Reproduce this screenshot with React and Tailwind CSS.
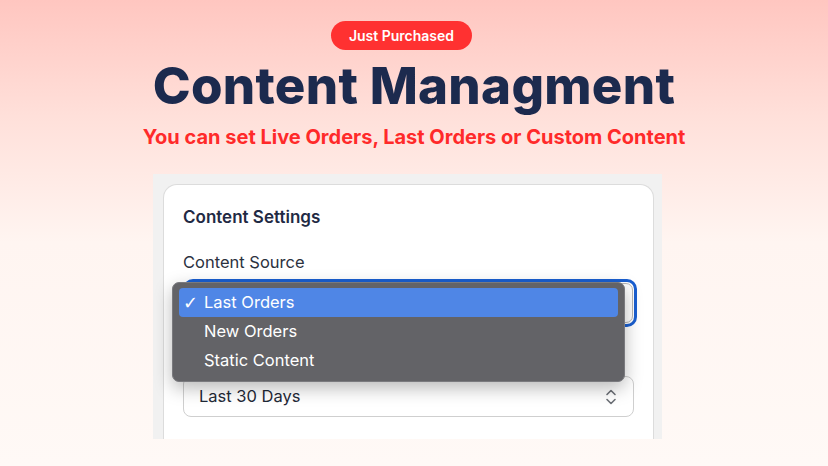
import React from 'react';

const ChevronUpDown = () => (
  <svg width="12" height="18" viewBox="0 0 12 18" fill="none" stroke="#6b6f76" strokeWidth="1.6" strokeLinecap="round" strokeLinejoin="round">
    <path d="M2 6.5L6 2.5L10 6.5" />
    <path d="M2 11.5L6 15.5L10 11.5" />
  </svg>
);

const options = ['Last Orders', 'New Orders', 'Static Content'];

const SourceMenu = () => (
  <div className="absolute left-[-11px] top-[3px] w-[453px] h-[100px] rounded-[7px] bg-[#636367] border border-[#7a7a7e] shadow-[0_6px_18px_rgba(0,0,0,0.28)] px-[6px] pt-[5px] z-10">
    {options.map((opt, i) => (
      <div
        key={opt}
        className={`h-[29px] flex items-center rounded-[4px] text-[16.5px] text-white ${i === 0 ? 'bg-[#4f86e6]' : ''}`}
      >
        <span className="w-[25px] pl-[4px] text-[18px] leading-none" style={{ fontFamily: '"DejaVu Sans", sans-serif' }}>
          {i === 0 ? '✓' : ''}
        </span>
        <span>{opt}</span>
      </div>
    ))}
  </div>
);

export default function App() {
  return (
    <div
      className="w-[828px] h-[466px] overflow-hidden flex flex-col items-center pt-[21px] bg-[linear-gradient(180deg,#ffc6c0_0%,#ffe0da_25%,#fff5f1_52%,#fff9f6_100%)]"
      style={{ fontFamily: 'Inter, "Noto Sans", sans-serif' }}
    >
      <div className="self-start ml-[331px] h-[29px] w-[141px] rounded-full bg-[#ff3131] flex items-center justify-center text-white text-[14px] font-semibold">
        Just Purchased
      </div>

      <h1 className="mt-[9px] text-[51px] leading-[54px] font-extrabold text-[#1c2a4e] tracking-[0.3px]">
        Content Managment
      </h1>

      <p className="mt-[12px] text-[20px] leading-[24px] font-bold text-[#ff2a2a]">
        You can set Live Orders, Last Orders or Custom Content
      </p>

      <div className="self-start ml-[153px] mt-[25px] w-[509px] h-[265px] bg-[#f1f1f1] pt-[10px] pl-[10px] pr-[8px]">
        <div className="h-full bg-white border border-b-0 border-[#dcdcdc] rounded-t-[14px] pl-[19px] pr-[17px] pt-[21px]">
          <h2 className="text-[17px] leading-[22px] font-semibold text-[#1f2a44]">Content Settings</h2>

          <div className="mt-[24px] text-[16.5px] leading-[20px] text-[#2c3240]">Content Source</div>

          <div className="relative mt-[7px]">
            <div className="h-[48px] w-[454px] rounded-[10px] border-[3px] border-[#1a5fd0] p-[1px]">
              <div className="h-full rounded-[7px] border border-[#b8b8b8] flex items-center justify-end pr-[14px]">
                <ChevronUpDown />
              </div>
            </div>
            <SourceMenu />
          </div>

          <div className="mt-[49px] h-[41px] w-[451px] rounded-[8px] border border-[#cfcfcf] flex items-center justify-between pl-[15px] pr-[16px]">
            <span className="text-[16.5px] text-[#1f2937]">Last 30 Days</span>
            <ChevronUpDown />
          </div>
        </div>
      </div>
    </div>
  );
}
